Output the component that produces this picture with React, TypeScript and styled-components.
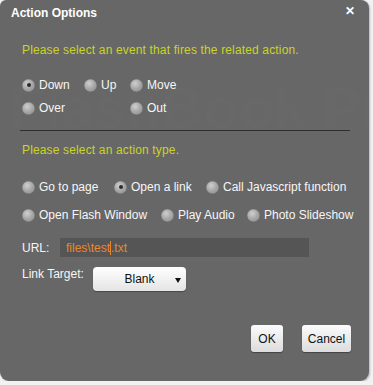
import React from "react";
import styled, { createGlobalStyle } from "styled-components";

const Global = createGlobalStyle`
  html, body { margin: 0; padding: 0; background: #f2f2f2; }
  body { font-family: "Liberation Sans", Arial, sans-serif; }
`;

const Dialog = styled.div`
  position: relative;
  width: 369px;
  height: 381px;
  background: #676767;
  border-radius: 6px 8px 9px 9px;
  box-shadow: 1px 1px 2px rgba(0, 0, 0, 0.25);
  overflow: hidden;
  display: flex;
  flex-direction: column;
  font-size: 12px;
  color: #f4f4f4;
`;

const Watermark = styled.div`
  position: absolute;
  left: 10px;
  top: 74px;
  font-family: "Liberation Sans", Arial, sans-serif;
  font-size: 58px;
  font-weight: bold;
  color: rgba(255, 255, 255, 0.012);
  white-space: nowrap;
  pointer-events: none;
  user-select: none;
`;

const TitleBar = styled.div`
  height: 26px;
  display: flex;
  align-items: center;
  justify-content: space-between;
  padding: 0 14px 2px 11px;
`;

const Title = styled.div`
  font-weight: bold;
  font-size: 12px;
  color: #ffffff;
`;

const Close = styled.div`
  font-size: 12px;
  font-weight: bold;
  color: #fff;
  line-height: 1;
  margin-top: -4px;
`;

const Body = styled.div`
  position: relative;
  padding: 15px 19px 0 22px;
  display: flex;
  flex-direction: column;
`;

const Prompt = styled.div<{ $mt?: number }>`
  color: #c9d32a;
  font-size: 12px;
  height: 14px;
  line-height: 14px;
  letter-spacing: 0.15px;
  margin-top: ${(p) => p.$mt ?? 0}px;
`;

const RadioRow = styled.div<{ $cols: string; $mt: number }>`
  display: grid;
  grid-template-columns: ${(p) => p.$cols};
  align-items: center;
  height: 16px;
  margin-top: ${(p) => p.$mt}px;
`;

const Option = styled.label`
  display: flex;
  align-items: center;
  gap: 4px;
  white-space: nowrap;
  color: #f6f6f6;
`;

const Dot = styled.span<{ $on?: boolean }>`
  width: 13px;
  height: 13px;
  border-radius: 50%;
  flex: none;
  display: flex;
  align-items: center;
  justify-content: center;
  background: radial-gradient(circle at 40% 35%, #cfcfcf 0%, #a8a8a8 45%, #848484 100%);
  box-shadow: inset 0 0 0 0.5px rgba(0, 0, 0, 0.2);
  &::after {
    content: "";
    display: ${(p) => (p.$on ? "block" : "none")};
    width: 4px;
    height: 4px;
    border-radius: 50%;
    background: #2b2b2b;
  }
`;

const Separator = styled.div`
  height: 1px;
  background: #2e2e2e;
  margin: 14px 0 0 -2px;
  width: 330px;
`;

const FieldRow = styled.div<{ $mt: number }>`
  display: flex;
  align-items: center;
  margin-top: ${(p) => p.$mt}px;
`;

const FieldLabel = styled.div<{ $w: number }>`
  width: ${(p) => p.$w}px;
  color: #f6f6f6;
`;

const UrlBox = styled.div`
  width: 243px;
  height: 19px;
  background: #555555;
  display: flex;
  align-items: center;
  padding-left: 6px;
  color: #e58a2a;
  font-size: 12px;
`;

const Caret = styled.span`
  display: inline-block;
  width: 1px;
  height: 14px;
  background: #e58a2a;
  vertical-align: middle;
`;

const Select = styled.div`
  position: relative;
  width: 93px;
  height: 24px;
  border-radius: 4px;
  background: linear-gradient(#ffffff, #e4e4e4);
  box-shadow: 0 1px 1px rgba(0, 0, 0, 0.3);
  display: flex;
  align-items: center;
  justify-content: center;
  color: #111;
  font-size: 12px;
  margin-top: 10px;
`;

const Arrow = styled.span`
  position: absolute;
  right: 5px;
  top: 11px;
  width: 0;
  height: 0;
  border-left: 3px solid transparent;
  border-right: 3px solid transparent;
  border-top: 5px solid #111;
`;

const Footer = styled.div`
  display: flex;
  justify-content: flex-end;
  gap: 19px;
  padding-right: 18px;
  margin-top: 34px;
`;

const Button = styled.div<{ $w: number }>`
  width: ${(p) => p.$w}px;
  height: 27px;
  border-radius: 3px;
  background: linear-gradient(#fbfbfb, #dcdcdc);
  box-shadow: 0 1px 1px rgba(0, 0, 0, 0.35);
  display: flex;
  align-items: center;
  justify-content: center;
  color: #111;
  font-size: 12px;
`;

export default function App() {
  return (
    <>
      <Global />
      <Dialog>
        <Watermark aria-hidden="true">FlashBook Pro</Watermark>
        <TitleBar>
          <Title>Action Options</Title>
          <Close>✕</Close>
        </TitleBar>
        <Body>
          <Prompt>Please select an event that fires the related action.</Prompt>
          <RadioRow $cols="62px 46px auto" $mt={20}>
            <Option><Dot $on />Down</Option>
            <Option><Dot />Up</Option>
            <Option><Dot />Move</Option>
          </RadioRow>
          <RadioRow $cols="108px auto" $mt={7}>
            <Option><Dot />Over</Option>
            <Option><Dot />Out</Option>
          </RadioRow>
          <Separator />
          <Prompt $mt={12}>Please select an action type.</Prompt>
          <RadioRow $cols="92px 92px auto" $mt={22}>
            <Option><Dot />Go to page</Option>
            <Option><Dot $on />Open a link</Option>
            <Option><Dot />Call Javascript function</Option>
          </RadioRow>
          <RadioRow $cols="139px 86px auto" $mt={12}>
            <Option><Dot />Open Flash Window</Option>
            <Option><Dot />Play Audio</Option>
            <Option><Dot />Photo Slideshow</Option>
          </RadioRow>
          <FieldRow $mt={15}>
            <FieldLabel $w={38}>URL:</FieldLabel>
            <UrlBox>files\test<Caret />.txt</UrlBox>
          </FieldRow>
          <FieldRow $mt={0}>
            <FieldLabel $w={71}>Link Target:</FieldLabel>
            <Select>
              Blank
              <Arrow />
            </Select>
          </FieldRow>
        </Body>
        <Footer>
          <Button $w={32}>OK</Button>
          <Button $w={49}>Cancel</Button>
        </Footer>
      </Dialog>
    </>
  );
}
